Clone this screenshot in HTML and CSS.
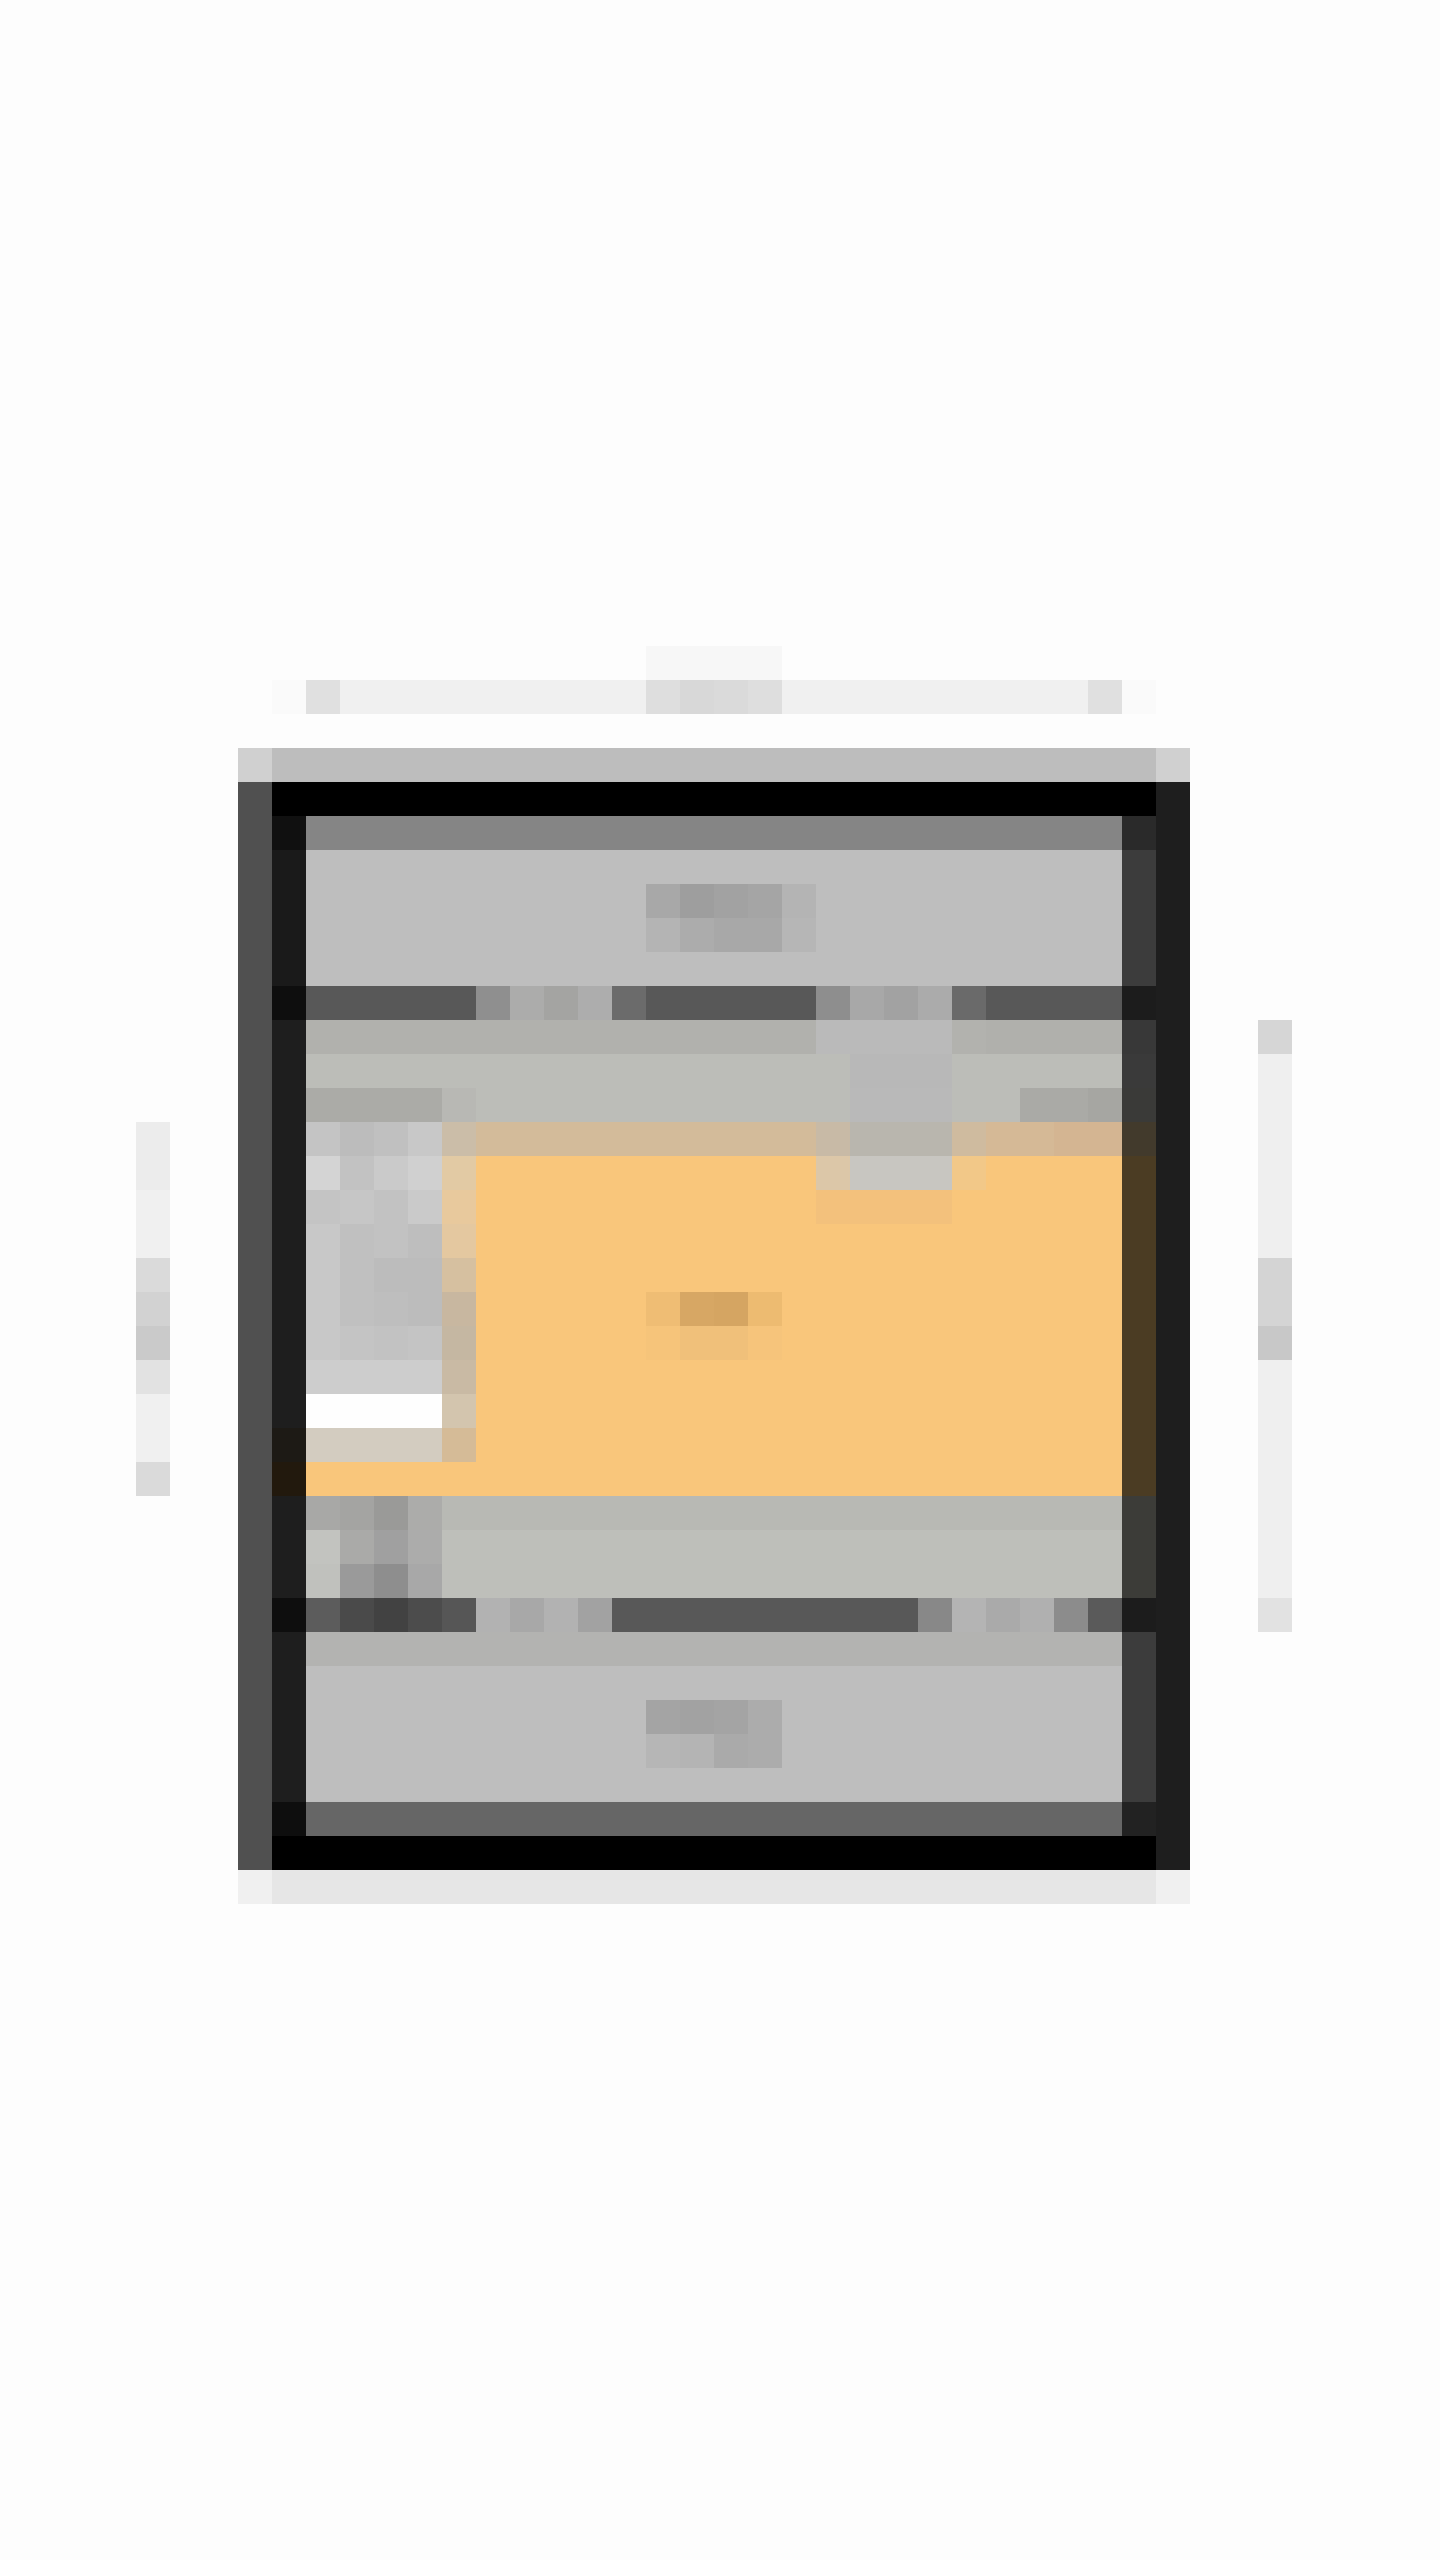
FILE: index.html
```html
<!DOCTYPE html>
<html lang="en">
<head>
<meta charset="utf-8">
<title>Device preview</title>
<link rel="stylesheet" href="styles.css">
</head>
<body>
<main class="stage">
  <div class="caption-halo"></div>
  <div class="caption"></div>
  <div class="ruler-left"></div>
  <div class="ruler-right"></div>

  <section class="device">
    <div class="device-cap"></div>
    <div class="device-body">
      <div class="row bezel"></div>
      <div class="row statusbar"></div>
      <header class="row appbar"><div class="appbar-title"></div></header>
      <nav class="row tabs">
        <span class="tab-label tab-one"></span>
        <span class="tab-label tab-two"></span>
      </nav>
      <div class="row tool tool-1"></div>
      <div class="row tool tool-2"></div>
      <div class="row tool tool-3"></div>

      <div class="content">
        <div class="edge-left"></div>
        <aside class="sidebar">
          <div class="side-item"></div>
          <div class="side-item"></div>
          <div class="side-item"></div>
          <div class="side-item"></div>
          <div class="side-item"></div>
          <div class="side-item"></div>
          <div class="side-item"></div>
          <div class="side-item"></div>
          <div class="side-item"></div>
          <div class="side-item"></div>
        </aside>
        <div class="divider"></div>
        <div class="panel">
          <div class="panel-strip"></div>
          <div class="panel-tab"><div class="panel-tab-top"></div><div class="panel-tab-bottom"></div></div>
          <div class="panel-badge"></div>
        </div>
        <div class="panel-foot"></div>
        <div class="edge-right"></div>
      </div>

      <div class="row list list-1"></div>
      <div class="row list list-2"></div>
      <div class="row list list-3"></div>
      <nav class="row bottomnav"></nav>
      <div class="row footer-rule"></div>
      <footer class="row footer"><div class="footer-mark"></div></footer>
      <div class="row homebar"></div>
      <div class="row bezel"></div>
    </div>
    <div class="device-shadow"></div>
  </section>
</main>
</body>
</html>
```
FILE: styles.css
```css
* { box-sizing: border-box; }

html, body {
  margin: 0;
  padding: 0;
  background: #fdfdfd;
  font-family: "Liberation Sans", Arial, sans-serif;
}

.stage {
  display: grid;
  grid-template-columns: repeat(42, 34px);
  grid-template-rows: repeat(75, 34px);
  min-height: 2560px;
}

/* ---------- outside marks ---------- */
.caption-halo {
  grid-column: 20 / 24;
  grid-row: 20;
  background: #f7f7f7;
}

.caption {
  grid-column: 9 / 35;
  grid-row: 21;
  background: linear-gradient(90deg,
    #fafafa 0 34px, #e0e0e0 34px 68px, #f0f0f0 68px 374px,
    #dedede 374px 408px, #d8d8d8 408px 442px, #dadada 442px 476px, #dedede 476px 510px,
    #f0f0f0 510px 816px, #e0e0e0 816px 850px, #fafafa 850px 884px);
}

.ruler-left {
  grid-column: 5;
  grid-row: 34 / 45;
  background: linear-gradient(180deg,
    #ececec 0 68px, #f0f0f0 68px 136px, #dadada 136px 170px, #d2d2d2 170px 204px,
    #cacaca 204px 238px, #e2e2e2 238px 272px, #f0f0f0 272px 340px, #dadada 340px 374px);
}

.ruler-right {
  grid-column: 38;
  grid-row: 31 / 49;
  background: linear-gradient(180deg,
    #d6d6d6 0 34px, #efefef 34px 238px, #d4d4d4 238px 306px, #c8c8c8 306px 340px,
    #efefef 340px 578px, #e2e2e2 578px 612px);
}

/* ---------- device ---------- */
.device {
  grid-column: 8 / 36;
  grid-row: 23 / 57;
  display: flex;
  flex-direction: column;
}

.device-cap {
  height: 34px;
  background: linear-gradient(90deg, #d0d0d0 0 34px, #bdbdbd 34px 918px, #d0d0d0 918px 952px);
}

.device-shadow {
  height: 34px;
  background: linear-gradient(90deg, #f0f0f0 0 34px, #e6e6e6 34px 918px, #f0f0f0 918px 952px);
}

.device-body {
  display: flex;
  flex-direction: column;
  border-left: 34px solid #505050;
  border-right: 34px solid #1e1e1e;
}

.row {
  height: 34px;
  border-left: 34px solid #1e1e1e;
  border-right: 34px solid #3c3c3c;
  background: #bebebe;
}

.bezel {
  background: #000;
  border-left-color: #000;
  border-right-color: #000;
}

.statusbar {
  background: #858585;
  border-left-color: #101010;
  border-right-color: #2a2a2a;
}

.appbar {
  height: 136px;
  padding: 34px 0 0 340px;
  border-left-color: #1a1a1a;
}

.appbar-title {
  width: 170px;
  height: 68px;
  background:
    linear-gradient(90deg, #a8a8a8 0 34px, #9e9e9e 34px 68px, #a2a2a2 68px 102px, #a5a5a5 102px 136px, #b4b4b4 136px 170px) top / 100% 34px no-repeat,
    linear-gradient(90deg, #b4b4b4 0 34px, #acacac 34px 68px, #a8a8a8 68px 102px, #a8a8a8 102px 136px, #b6b6b6 136px 170px) bottom / 100% 34px no-repeat;
}

.tabs {
  display: flex;
  gap: 170px;
  padding-left: 170px;
  background: #585858;
  border-left-color: #0e0e0e;
  border-right-color: #1c1c1c;
}

.tab-label {
  display: block;
  width: 170px;
  height: 34px;
}

.tab-one {
  background: linear-gradient(90deg, #8f8f8f 0 34px, #acacab 34px 68px, #a4a4a2 68px 102px, #adadad 102px 136px, #6b6b6b 136px 170px);
}

.tab-two {
  background: linear-gradient(90deg, #8e8e8e 0 34px, #a8a8a8 34px 68px, #a2a2a2 68px 102px, #ababab 102px 136px, #6a6a6a 136px 170px);
}

.tool { border-right-color: #3a3a3a; }

.tool-1 {
  border-right-color: #383838;
  background: linear-gradient(90deg, #b1b1ad 0 510px, #bababa 510px 646px, #b2b2ae 646px 680px, #b0b0ac 680px 816px);
}

.tool-2 {
  background: linear-gradient(90deg, #bcbdb8 0 544px, #b8b8b8 544px 646px, #bcbdb8 646px 816px);
}

.tool-3 {
  border-right-color: #3a3a38;
  background: linear-gradient(90deg, #ababa7 0 136px, #b8b8b4 136px 170px, #bcbdb8 170px 544px,
    #b9b9b9 544px 646px, #bcbdb8 646px 714px, #aaaaa6 714px 782px, #a6a6a2 782px 816px);
}

/* ---------- content ---------- */
.content {
  display: grid;
  grid-template-columns: 34px 136px 34px 646px 34px;
  grid-template-rows: 340px 34px;
}

.edge-left {
  grid-column: 1;
  grid-row: 1 / 3;
  background: linear-gradient(180deg, #1e1e1e 0 306px, #1d1a15 306px 340px, #22190d 340px 374px);
}

.edge-right {
  grid-column: 5;
  grid-row: 1 / 3;
  background: linear-gradient(180deg, #423a2c 0 34px, #4b3c23 34px 374px);
}

.sidebar {
  grid-column: 2;
  grid-row: 1;
  display: flex;
  flex-direction: column;
}

.side-item { height: 34px; }
.side-item:nth-child(1) { background: linear-gradient(90deg, #c4c4c4 0 34px, #bcbcbc 34px 68px, #c0c0c0 68px 102px, #c8c8c8 102px 136px); }
.side-item:nth-child(2) { background: linear-gradient(90deg, #d4d4d4 0 34px, #c2c2c2 34px 68px, #cacaca 68px 102px, #d0d0d0 102px 136px); }
.side-item:nth-child(3) { background: linear-gradient(90deg, #c4c4c4 0 34px, #c6c6c6 34px 68px, #c2c2c2 68px 102px, #cacaca 102px 136px); }
.side-item:nth-child(4) { background: linear-gradient(90deg, #c8c8c8 0 34px, #c0c0c0 34px 68px, #c2c2c2 68px 102px, #bebebe 102px 136px); }
.side-item:nth-child(5) { background: linear-gradient(90deg, #c8c8c8 0 34px, #c0c0c0 34px 68px, #bcbcbc 68px 136px); }
.side-item:nth-child(6) { background: linear-gradient(90deg, #c8c8c8 0 34px, #c0c0c0 34px 68px, #bebebe 68px 102px, #bcbcbc 102px 136px); }
.side-item:nth-child(7) { background: linear-gradient(90deg, #c8c8c8 0 34px, #c4c4c4 34px 68px, #c2c2c2 68px 102px, #c4c4c4 102px 136px); }
.side-item:nth-child(8) { background: #cdcdcd; }
.side-item:nth-child(9) { background: #fefefe; }
.side-item:nth-child(10) { background: #d3ccc0; }

.divider {
  grid-column: 3;
  grid-row: 1;
  background: linear-gradient(180deg,
    #cbbda8 0 34px, #e2caa4 34px 68px, #e8c99d 68px 102px, #e4c8a0 102px 136px,
    #d6c0a0 136px 170px, #c8b7a0 170px 204px, #c5b7a2 204px 238px, #c9baa4 238px 272px,
    #d3c5ae 272px 306px, #d5bb97 306px 340px);
}

.panel {
  grid-column: 4;
  grid-row: 1;
  background: #f9c67b;
  display: flex;
  flex-direction: column;
}

.panel-strip {
  height: 34px;
  background: linear-gradient(90deg, #d3bb9a 0 340px, #c8baa6 340px 374px, #b9b6ae 374px 476px,
    #cfbb9f 476px 510px, #d5b996 510px 578px, #d4b592 578px 646px);
}

.panel-tab {
  margin-left: 340px;
  width: 170px;
  display: flex;
  flex-direction: column;
}

.panel-tab-top {
  height: 34px;
  background: linear-gradient(90deg, #dcc7a8 0 34px, #c8c6c1 34px 136px, #f2c888 136px 170px);
}

.panel-tab-bottom {
  height: 34px;
  width: 136px;
  background: #f3c17c;
}

.panel-badge {
  margin: 68px 0 0 170px;
  width: 136px;
  height: 68px;
  background:
    linear-gradient(90deg, #efbd74 0 34px, #d7a764 34px 68px, #d5a562 68px 102px, #edbb71 102px 136px) top / 100% 34px no-repeat,
    linear-gradient(90deg, #f6c47a 0 34px, #f0c07a 34px 102px, #f6c47b 102px 136px) bottom / 100% 34px no-repeat;
}

.panel-foot {
  grid-column: 2 / 5;
  grid-row: 2;
  background: #f9c67b;
}

/* ---------- lower rows ---------- */
.list { border-right-color: #3c3c38; }

.list-1 {
  background: linear-gradient(90deg, #a8a8a6 0 34px, #a4a4a2 34px 68px, #9a9a98 68px 102px, #acacaa 102px 136px, #b8b9b4 136px 816px);
}

.list-2 {
  background: linear-gradient(90deg, #c2c3bf 0 34px, #aaaaa8 34px 68px, #a0a0a0 68px 102px, #acacab 102px 136px, #bebfba 136px 816px);
}

.list-3 {
  background: linear-gradient(90deg, #c0c1bd 0 34px, #9a9a9a 34px 68px, #8e8e8e 68px 102px, #a8a8a8 102px 136px, #bebfba 136px 816px);
}

.bottomnav {
  border-left-color: #0e0e0e;
  border-right-color: #1c1c1c;
  background: linear-gradient(90deg,
    #5c5c5c 0 34px, #4a4a4a 34px 68px, #424242 68px 102px, #4c4c4c 102px 136px, #565656 136px 170px,
    #b2b2b2 170px 204px, #a8a8a8 204px 238px, #b2b2b2 238px 272px, #a2a2a2 272px 306px,
    #585858 306px 612px,
    #888888 612px 646px, #b4b4b4 646px 680px, #aaaaaa 680px 714px, #b0b0b0 714px 748px,
    #8c8c8c 748px 782px, #5a5a5a 782px 816px);
}

.footer-rule { background: #b3b3b1; }

.footer {
  height: 136px;
  padding: 34px 0 0 340px;
}

.footer-mark {
  width: 136px;
  height: 68px;
  background:
    linear-gradient(90deg, #a4a4a4 0 34px, #a2a2a2 34px 68px, #a4a4a4 68px 102px, #acacac 102px 136px) top / 100% 34px no-repeat,
    linear-gradient(90deg, #b6b6b6 0 34px, #b4b4b4 34px 68px, #aaaaaa 68px 102px, #acacac 102px 136px) bottom / 100% 34px no-repeat;
}

.homebar {
  background: #666666;
  border-left-color: #0e0e0e;
  border-right-color: #222222;
}
```
